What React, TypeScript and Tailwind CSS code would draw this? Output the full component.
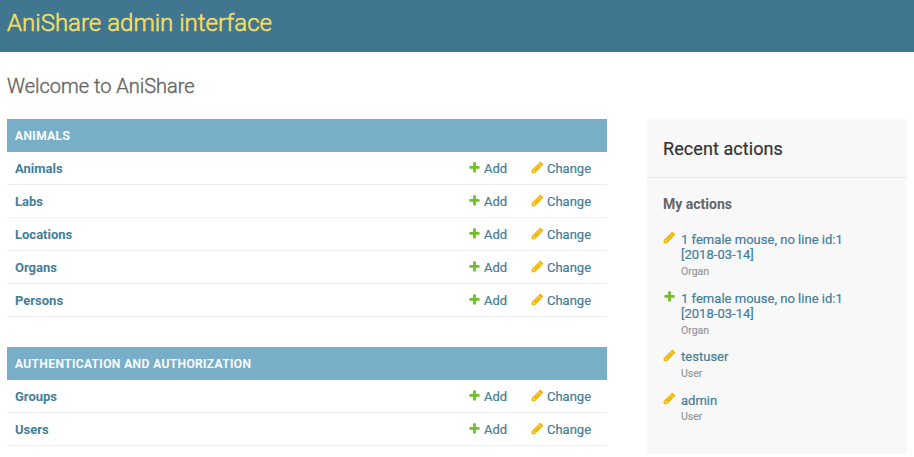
import React from "react";

function Plus() {
  return (
    <svg width="13" height="13" viewBox="0 0 1792 1792" className="shrink-0" fill="#70bf2b">
      <path d="M1600 796v192q0 40-28 68t-68 28h-416v416q0 40-28 68t-68 28h-192q-40 0-68-28t-28-68v-416h-416q-40 0-68-28t-28-68v-192q0-40 28-68t68-28h416v-416q0-40 28-68t68-28h192q40 0 68 28t28 68v416h416q40 0 68 28t28 68z" />
    </svg>
  );
}

function Pencil() {
  return (
    <svg width="13" height="13" viewBox="0 0 1792 1792" className="shrink-0" fill="#efb80b" stroke="#efb80b" strokeWidth="70">
      <path d="M491 1536l91-91-235-235-91 91v107h128v128h107zm523-928q0-22-22-22-10 0-17 7l-542 542q-7 7-7 17 0 22 22 22 10 0 17-7l542-542q7-7 7-17zm-54-192l416 416-832 832h-416v-416zm683 96q0 53-37 90l-166 166-416-416 166-165q36-38 90-38 53 0 91 38l235 234q37 39 37 91z" />
    </svg>
  );
}

function Module({ title, rows }: { title: string; rows: string[] }) {
  return (
    <section className="mb-[30px]">
      <h2 className="h-[33px] bg-[#79aec8] px-2 pt-px text-[12px] leading-[32px] font-medium tracking-[0.42px] text-white uppercase [-webkit-text-stroke:0.2px]">
        {title}
      </h2>
      {rows.map((row) => (
        <div key={row} className="flex h-[33px] items-start border-b border-[#eee] px-2 pt-[9px] text-[13px] leading-4 text-[#447e9b]">
          <span className="flex-1 font-bold">{row}</span>
          <span className="flex w-[63px] items-start gap-[3px] [-webkit-text-stroke:0.2px]"><Plus />Add</span>
          <span className="flex w-[68px] items-start gap-[3px] [-webkit-text-stroke:0.2px]"><Pencil />Change</span>
        </div>
      ))}
    </section>
  );
}

const actions = [
  { icon: "change", lines: ["1 female mouse, no line id:1", "[2018-03-14]"], kind: "Organ", text: "pt-px", sub: "mt-[2px]" },
  { icon: "add", lines: ["1 female mouse, no line id:1", "[2018-03-14]"], kind: "Organ", text: "pt-px", sub: "mt-[2px]" },
  { icon: "change", lines: ["testuser"], kind: "User", text: "", sub: "mt-[2px]" },
  { icon: "change", lines: ["admin"], kind: "User", text: "pt-px", sub: "mt-px" },
];

export default function App() {
  return (
    <div className="h-[457px] overflow-hidden bg-white font-['Roboto',sans-serif]">
      <header className="h-[52px] bg-[#417690] px-[7px] pt-[8px]">
        <h1 className="text-[24px] leading-[30px] font-light tracking-[0.02px] text-[#f5dd5d] [-webkit-text-stroke:0.6px]">AniShare admin interface</h1>
      </header>
      <h1 className="mt-[22px] ml-[7px] text-[20px] leading-6 font-light text-[#666] [-webkit-text-stroke:0.4px]">Welcome to AniShare</h1>
      <div className="mt-[21px] flex gap-10 px-[7px]">
        <main className="w-[600px]">
          <Module title="Animals" rows={["Animals", "Labs", "Locations", "Organs", "Persons"]} />
          <Module title="Authentication and Authorization" rows={["Groups", "Users"]} />
        </main>
        <aside className="h-[335px] w-[260px] bg-[#f8f8f8]">
          <h2 className="h-[59px] border-b border-[#eaeaea] px-4 text-[18px] leading-[59px] tracking-[0.07px] text-[#333] [-webkit-text-stroke:0.2px]">Recent actions</h2>
          <h3 className="mt-[18px] mb-[19px] px-4 text-[14px] leading-4 font-bold text-[#666]">My actions</h3>
          <ul className="px-4">
            {actions.map((a, i) => (
              <li key={i} className="mb-[11px] flex gap-[5px]">
                {a.icon === "add" ? <Plus /> : <Pencil />}
                <div className={`text-[13px] leading-[15px] tracking-[0.02px] text-[#447e9b] [-webkit-text-stroke:0.2px] ${a.text}`}>
                  {a.lines.map((l) => <div key={l}>{l}</div>)}
                  <div className={`text-[10.5px] leading-[15px] tracking-normal text-[#999] ${a.sub}`}>{a.kind}</div>
                </div>
              </li>
            ))}
          </ul>
        </aside>
      </div>
    </div>
  );
}
